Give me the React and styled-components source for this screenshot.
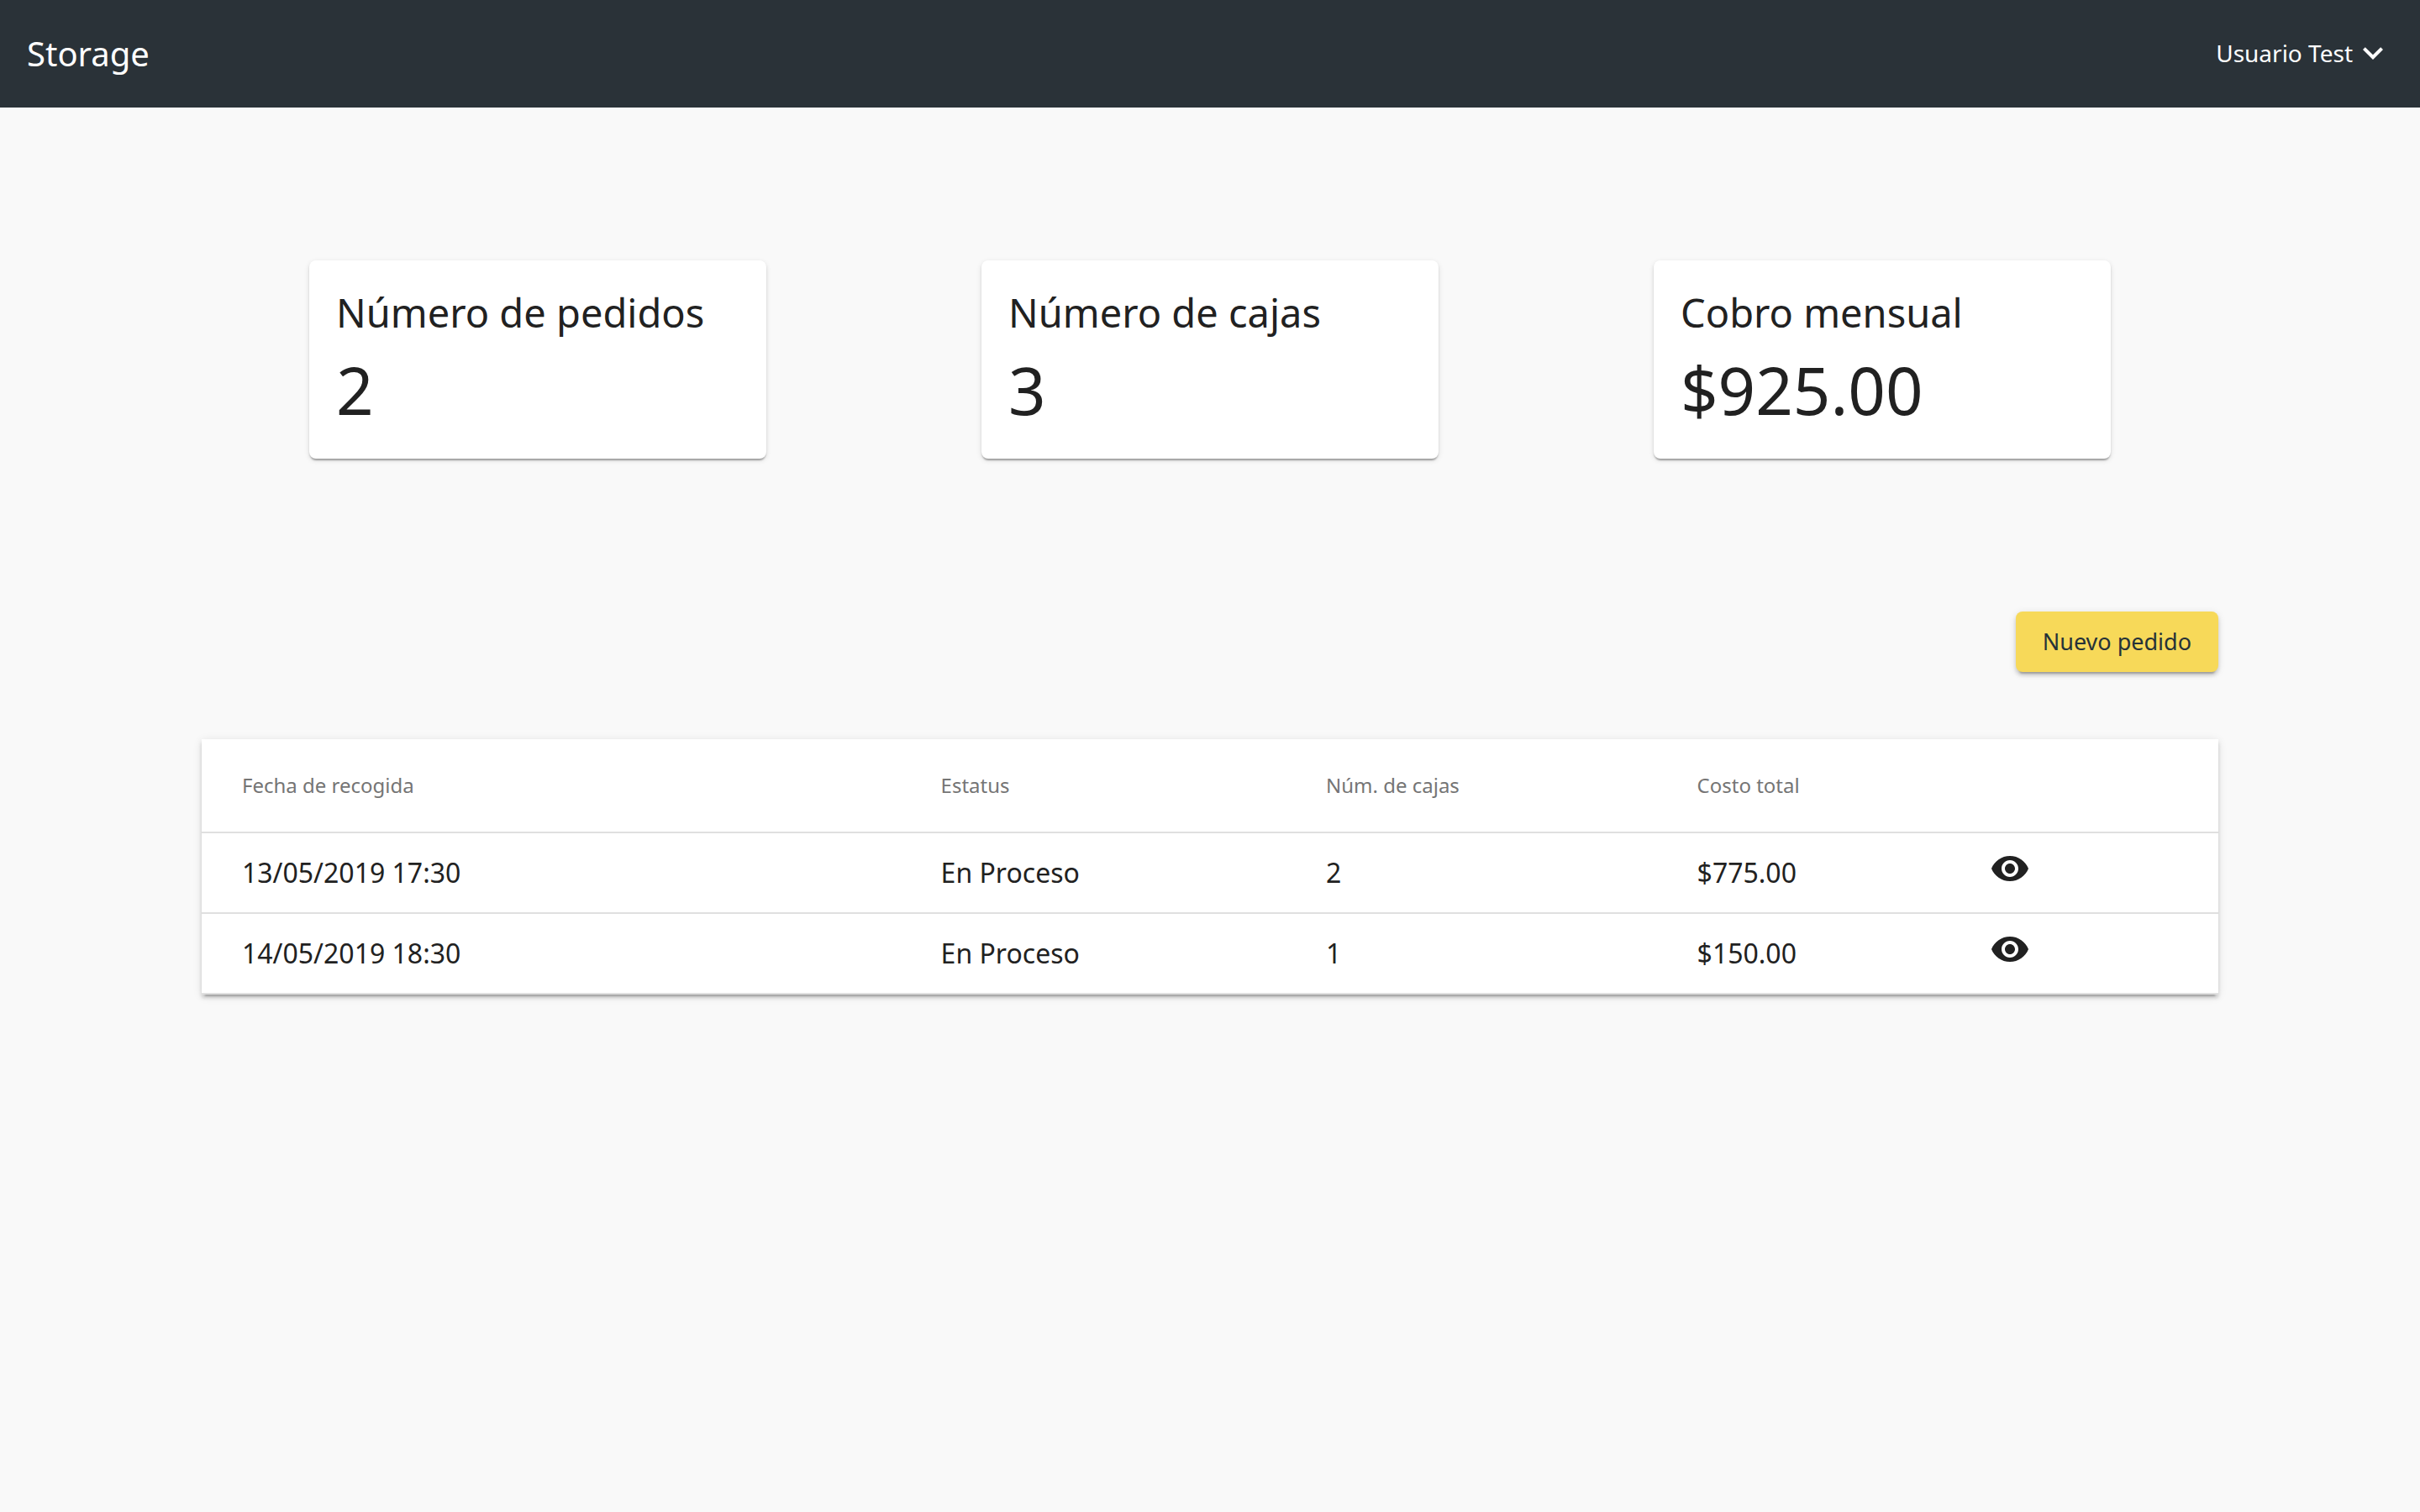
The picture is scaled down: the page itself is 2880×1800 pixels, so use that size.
import React from 'react';
import styled, { createGlobalStyle } from 'styled-components';

const GlobalStyle = createGlobalStyle`
  *, *::before, *::after { box-sizing: border-box; }
  body {
    margin: 0;
    background: #f9f9f9;
    color: #212121;
    font-family: "Noto Sans", "Open Sans", sans-serif;
    font-size: 32px;
  }
`;

const Toolbar = styled.header`
  display: flex;
  align-items: center;
  justify-content: space-between;
  height: 128px;
  padding: 0 32px 2px;
  background: #2a3238;
  color: #fff;
`;

const Brand = styled.a`
  color: inherit;
  font-size: 40px;
  text-decoration: none;
`;

const UserMenu = styled.button`
  display: flex;
  align-items: center;
  padding: 0;
  border: 0;
  background: none;
  color: inherit;
  font-family: inherit;
  font-size: 28px;
  cursor: pointer;
`;

const Icon = styled.svg`
  display: block;
  width: 48px;
  height: 48px;
  fill: currentColor;
`;

const Page = styled.main`
  width: 100%;
  max-width: 2400px;
  margin: 0 auto;
  padding-bottom: 80px;
`;

const Summary = styled.section`
  display: grid;
  grid-template-columns: repeat(3, 1fr);
  justify-items: center;
  padding: 182px 0;
`;

const Card = styled.article`
  display: flex;
  flex-direction: column;
  gap: 12px;
  width: 68%;
  padding: 32px;
  border-radius: 8px;
  background: #fff;
  box-shadow:
    0 4px 2px -2px rgba(0, 0, 0, 0.2),
    0 2px 2px rgba(0, 0, 0, 0.14),
    0 2px 6px rgba(0, 0, 0, 0.12);
`;

const CardTitle = styled.h2`
  margin: 0;
  font-size: 47px;
  font-weight: 400;
  line-height: 60px;
`;

const CardValue = styled.p`
  margin: 0;
  font-size: 78px;
  line-height: 100px;
`;

const Actions = styled.div`
  display: flex;
  justify-content: flex-end;
  margin-bottom: 80px;
`;

const PrimaryButton = styled.button`
  padding: 0 32px;
  border: 0;
  border-radius: 8px;
  background: #f7d959;
  color: #263238;
  font-family: inherit;
  font-size: 27px;
  line-height: 72px;
  cursor: pointer;
  box-shadow:
    0 6px 2px -4px rgba(0, 0, 0, 0.2),
    0 4px 4px rgba(0, 0, 0, 0.14),
    0 2px 10px rgba(0, 0, 0, 0.12);
`;

const TablePanel = styled.section`
  background: #fff;
  box-shadow:
    0 6px 2px -4px rgba(0, 0, 0, 0.2),
    0 4px 4px rgba(0, 0, 0, 0.14),
    0 2px 10px rgba(0, 0, 0, 0.12);
`;

const Table = styled.table`
  width: 100%;
  table-layout: fixed;
  border-collapse: separate;
  border-spacing: 0;
`;

const Column = styled.col`
  width: ${({ $share }) => $share}%;
`;

const HeadCell = styled.th`
  height: 112px;
  padding: 0 0 2px 48px;
  border-bottom: 2px solid #e0e0e0;
  color: #757575;
  font-size: 24px;
  font-weight: 400;
  text-align: left;
`;

const Cell = styled.td`
  height: 96px;
  padding: 0 0 2px 48px;
  border-bottom: 2px solid #e0e0e0;
  font-size: 32px;
`;

const ActionCell = styled(Cell)`
  padding-bottom: 10px;
`;

const IconButton = styled.button`
  display: block;
  padding: 0;
  border: 0;
  background: none;
  color: inherit;
  cursor: pointer;
`;

const summary = [
  { title: 'Número de pedidos', value: '2' },
  { title: 'Número de cajas', value: '3' },
  { title: 'Cobro mensual', value: '$925.00' },
];

const columns = [
  { label: 'Fecha de recogida', share: 34.65 },
  { label: 'Estatus', share: 19.1 },
  { label: 'Núm. de cajas', share: 18.4 },
  { label: 'Costo total', share: 14.5 },
  { label: '', share: 13.35 },
];

const orders = [
  { date: '13/05/2019 17:30', status: 'En Proceso', boxes: 2, total: '$775.00' },
  { date: '14/05/2019 18:30', status: 'En Proceso', boxes: 1, total: '$150.00' },
];

const ChevronDown = () => (
  <Icon viewBox="0 0 24 24" aria-hidden="true">
    <path d="M7.41 8.59 12 13.17l4.59-4.58L18 10l-6 6-6-6z" />
  </Icon>
);

const Eye = () => (
  <Icon viewBox="0 0 24 24" aria-hidden="true">
    <path d="M12 4.5C7 4.5 2.73 7.61 1 12c1.73 4.39 6 7.5 11 7.5s9.27-3.11 11-7.5c-1.73-4.39-6-7.5-11-7.5zM12 17c-2.76 0-5-2.24-5-5s2.24-5 5-5 5 2.24 5 5-2.24 5-5 5zm0-8c-1.66 0-3 1.34-3 3s1.34 3 3 3 3-1.34 3-3-1.34-3-3-3z" />
  </Icon>
);

export default function App() {
  return (
    <>
      <GlobalStyle />
      <Toolbar>
        <Brand href="#">Storage</Brand>
        <UserMenu type="button" aria-haspopup="menu">
          Usuario Test
          <ChevronDown />
        </UserMenu>
      </Toolbar>
      <Page>
        <Summary>
          {summary.map(({ title, value }) => (
            <Card key={title}>
              <CardTitle>{title}</CardTitle>
              <CardValue>{value}</CardValue>
            </Card>
          ))}
        </Summary>
        <Actions>
          <PrimaryButton type="button">Nuevo pedido</PrimaryButton>
        </Actions>
        <TablePanel>
          <Table>
            <colgroup>
              {columns.map(({ label, share }) => (
                <Column key={label} $share={share} />
              ))}
            </colgroup>
            <thead>
              <tr>
                {columns.map(({ label }) => (
                  <HeadCell key={label} scope="col">{label}</HeadCell>
                ))}
              </tr>
            </thead>
            <tbody>
              {orders.map(({ date, status, boxes, total }) => (
                <tr key={date}>
                  <Cell>{date}</Cell>
                  <Cell>{status}</Cell>
                  <Cell>{boxes}</Cell>
                  <Cell>{total}</Cell>
                  <ActionCell>
                    <IconButton type="button" aria-label={`Ver pedido ${date}`}>
                      <Eye />
                    </IconButton>
                  </ActionCell>
                </tr>
              ))}
            </tbody>
          </Table>
        </TablePanel>
      </Page>
    </>
  );
}
